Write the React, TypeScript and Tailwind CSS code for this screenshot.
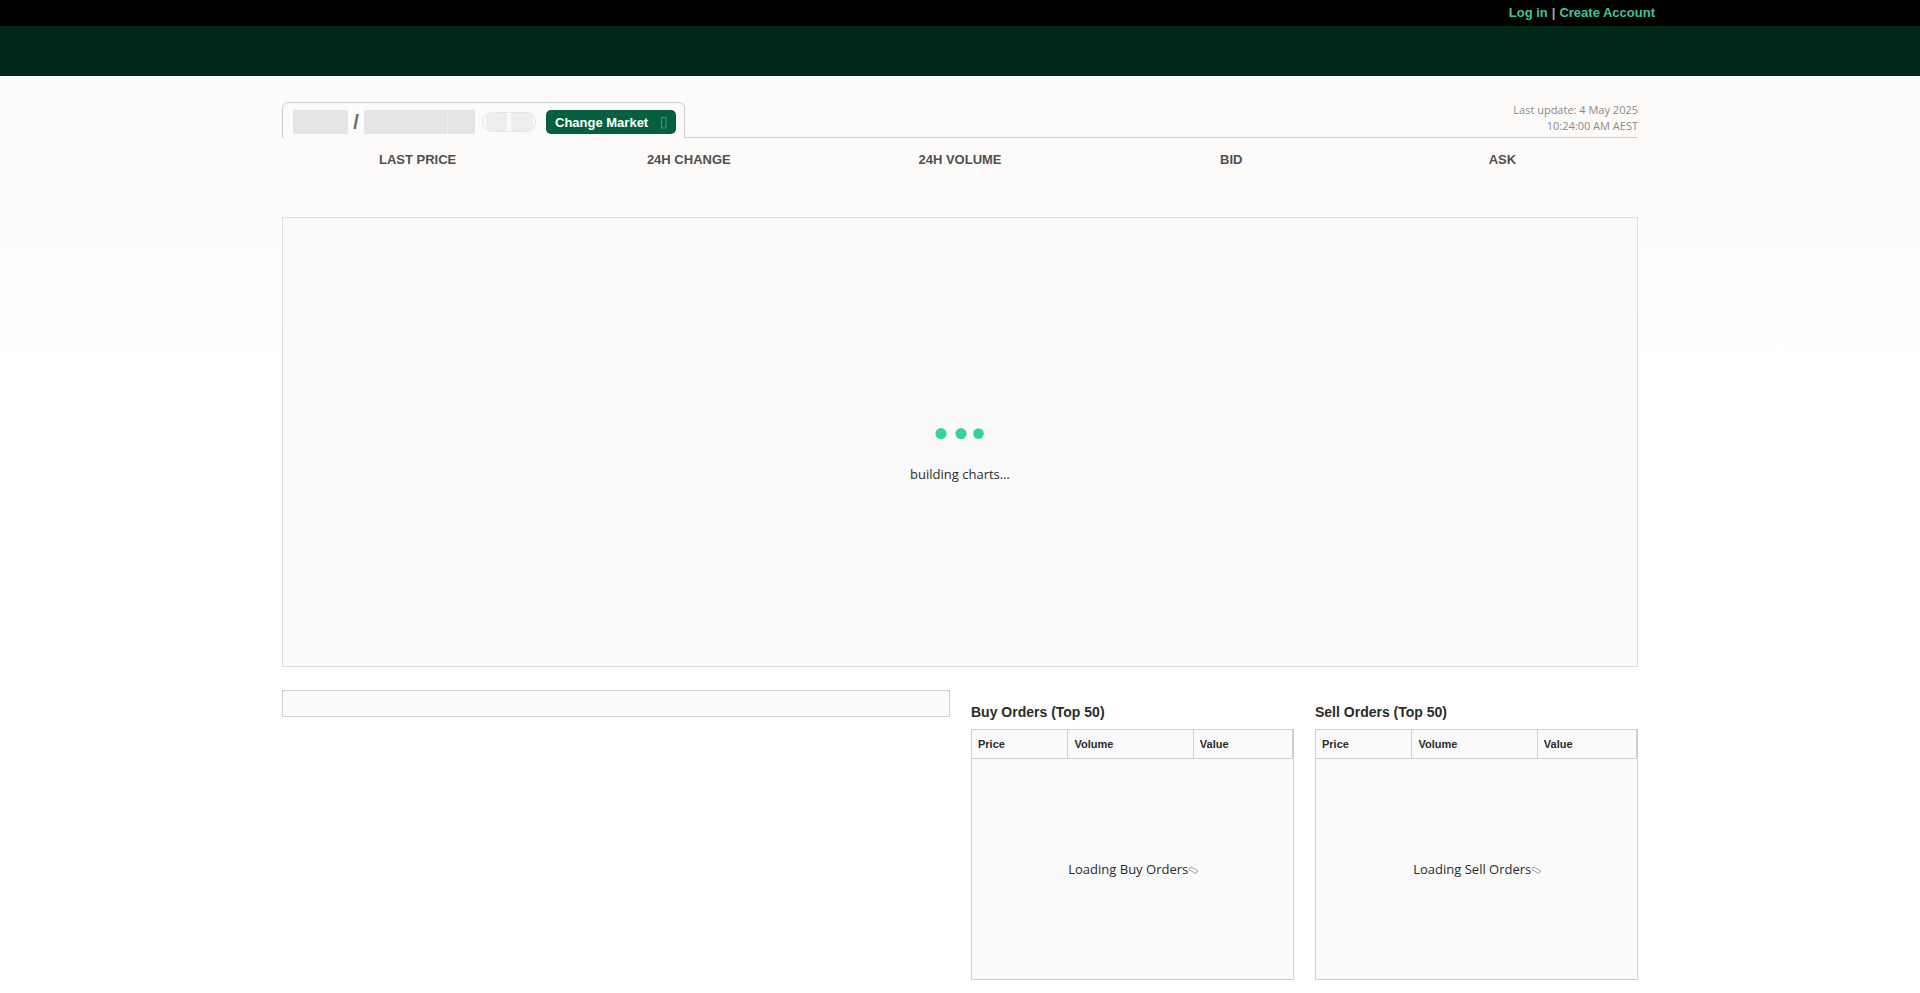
import clsx from "clsx";

const stats = ["LAST PRICE", "24H CHANGE", "24H VOLUME", "BID", "ASK"];

export default function App() {
  return (
    <div className="min-h-screen bg-white pb-3 font-['Liberation_Sans',Arial,sans-serif] text-[13px] text-[#2b2b2b]">
      <TopBar />
      <div className="h-[50px] bg-[#00281b]" />
      <main className="bg-[linear-gradient(to_bottom,#fcfbf9_0,#fcfbf9_110px,#ffffff_300px)] px-4 pt-[26px]">
        <div className="mx-auto max-w-[1356px]">
          <MarketHeader />
          <dl className="grid h-[79px] grid-cols-5 pt-3 text-center">
            {stats.map((label) => (
              <div key={label}>
                <dt className="font-bold leading-5 text-[#505050]">{label}</dt>
                <dd />
              </div>
            ))}
          </dl>
          <ChartPanel />
          <div className="mt-[23px] flex items-start gap-[21px]">
            <div className="h-[27px] flex-1 border border-[#d0d0d0] bg-[#fafafa]" />
            <OrderBook side="Buy" />
            <OrderBook side="Sell" />
          </div>
        </div>
      </main>
    </div>
  );
}

function TopBar() {
  return (
    <div className="bg-black px-4">
      <div className="mx-auto flex h-[26px] max-w-[1390px] items-center justify-end gap-1 font-bold">
        <a href="#login" className="text-[#40c595]">
          Log in
        </a>
        <span className="text-[#a8a8a8]">|</span>
        <a href="#register" className="text-[#40c595]">
          Create Account
        </a>
      </div>
    </div>
  );
}

function MarketHeader() {
  return (
    <div className="flex items-end">
      <div className="flex h-9 items-start rounded-t-md border border-b-0 border-[#d0d0d0] pt-[7px] pr-2 pl-[10px]">
        <div className="flex h-6 items-center">
          <div className="flex h-6 w-[55px] bg-[#e5e5e7]">
            <div className="ml-7 w-4 border-x border-[#e9e9eb]" />
          </div>
          <span className="w-4 text-center text-xl leading-6 font-bold text-[#6a6a6a]">
            /
          </span>
          <div className="h-6 w-[111px] bg-[#e5e5e7] pl-[83px]">
            <div className="h-6 border-l border-[#efeff1]" />
          </div>
          <div className="ml-[7px] flex h-5 w-[54px] justify-center gap-1 rounded-full border border-[#e6e6e6]">
            <div className="w-[21px] rounded-xs bg-[#eeeeee]" />
            <div className="w-[22px] rounded-xs bg-[#eeeeee]" />
          </div>
          <button className="ml-[10px] flex h-6 w-[130px] items-center justify-between rounded-[5px] bg-[#04603f] px-[9px] pt-px font-bold text-white">
            Change Market
            <svg width="6" height="12" viewBox="0 0 6 12" fill="none" aria-hidden="true">
              <rect x="0.5" y="0.5" width="4.5" height="10.5" stroke="#3c9c78" />
            </svg>
          </button>
        </div>
      </div>
      <p className="flex h-9 flex-1 flex-col justify-end border-b border-[#d0d0d0] pb-[3px] text-right font-['Open_Sans',sans-serif] text-[11px] leading-4 text-[#8a8a8a]">
        <span>Last update: 4 May 2025</span>
        <span>10:24:00 AM AEST</span>
      </p>
    </div>
  );
}

function ChartPanel() {
  return (
    <div className="flex h-[450px] flex-col items-center border border-[#dedede] bg-[#fafafa] pt-[210px]">
      <svg width="50" height="12" viewBox="0 0 50 12" fill="#33d399" aria-hidden="true">
        <circle cx="6" cy="5.6" r="5.6" />
        <circle cx="26" cy="5.6" r="5.6" />
        <circle cx="43.5" cy="5.6" r="5.3" />
      </svg>
      <p className="mt-6 font-['Open_Sans',sans-serif] leading-5">
        building charts…
      </p>
    </div>
  );
}

function OrderBook({ side }: { side: "Buy" | "Sell" }) {
  const columns = [
    { name: "Price", width: "w-[30%]" },
    { name: "Volume", width: "w-[39%]" },
    { name: "Value", width: "w-[31%]" },
  ];

  return (
    <section className="w-[323px] pt-3">
      <h2 className="h-[27px] text-sm font-bold leading-5">
        {side} Orders (Top 50)
      </h2>
      <table className="w-full table-fixed border-collapse border border-[#d0d0d0] bg-[#fafafa]">
        <thead>
          <tr className="h-[29px] border-b border-[#d0d0d0]">
            {columns.map(({ name, width }) => (
              <th
                key={name}
                className={clsx(
                  width,
                  "border-r border-[#d0d0d0] pl-[6px] text-left text-[11px] font-bold last:border-r-2"
                )}
              >
                {name}
              </th>
            ))}
          </tr>
        </thead>
        <tbody>
          <tr>
            <td
              colSpan={3}
              className="h-[221px] pt-0.5 pl-0.5 text-center font-['Open_Sans',sans-serif]"
            >
              <span className="inline-flex items-center">
                Loading {side} Orders
                <svg width="10" height="9" viewBox="0 0 10 9" fill="none" aria-hidden="true">
                  <path d="M2.6 0.8 9.5 4.8 7.8 7.6 0.9 3.6Z" stroke="#a0a0a0" />
                </svg>
              </span>
            </td>
          </tr>
        </tbody>
      </table>
    </section>
  );
}
